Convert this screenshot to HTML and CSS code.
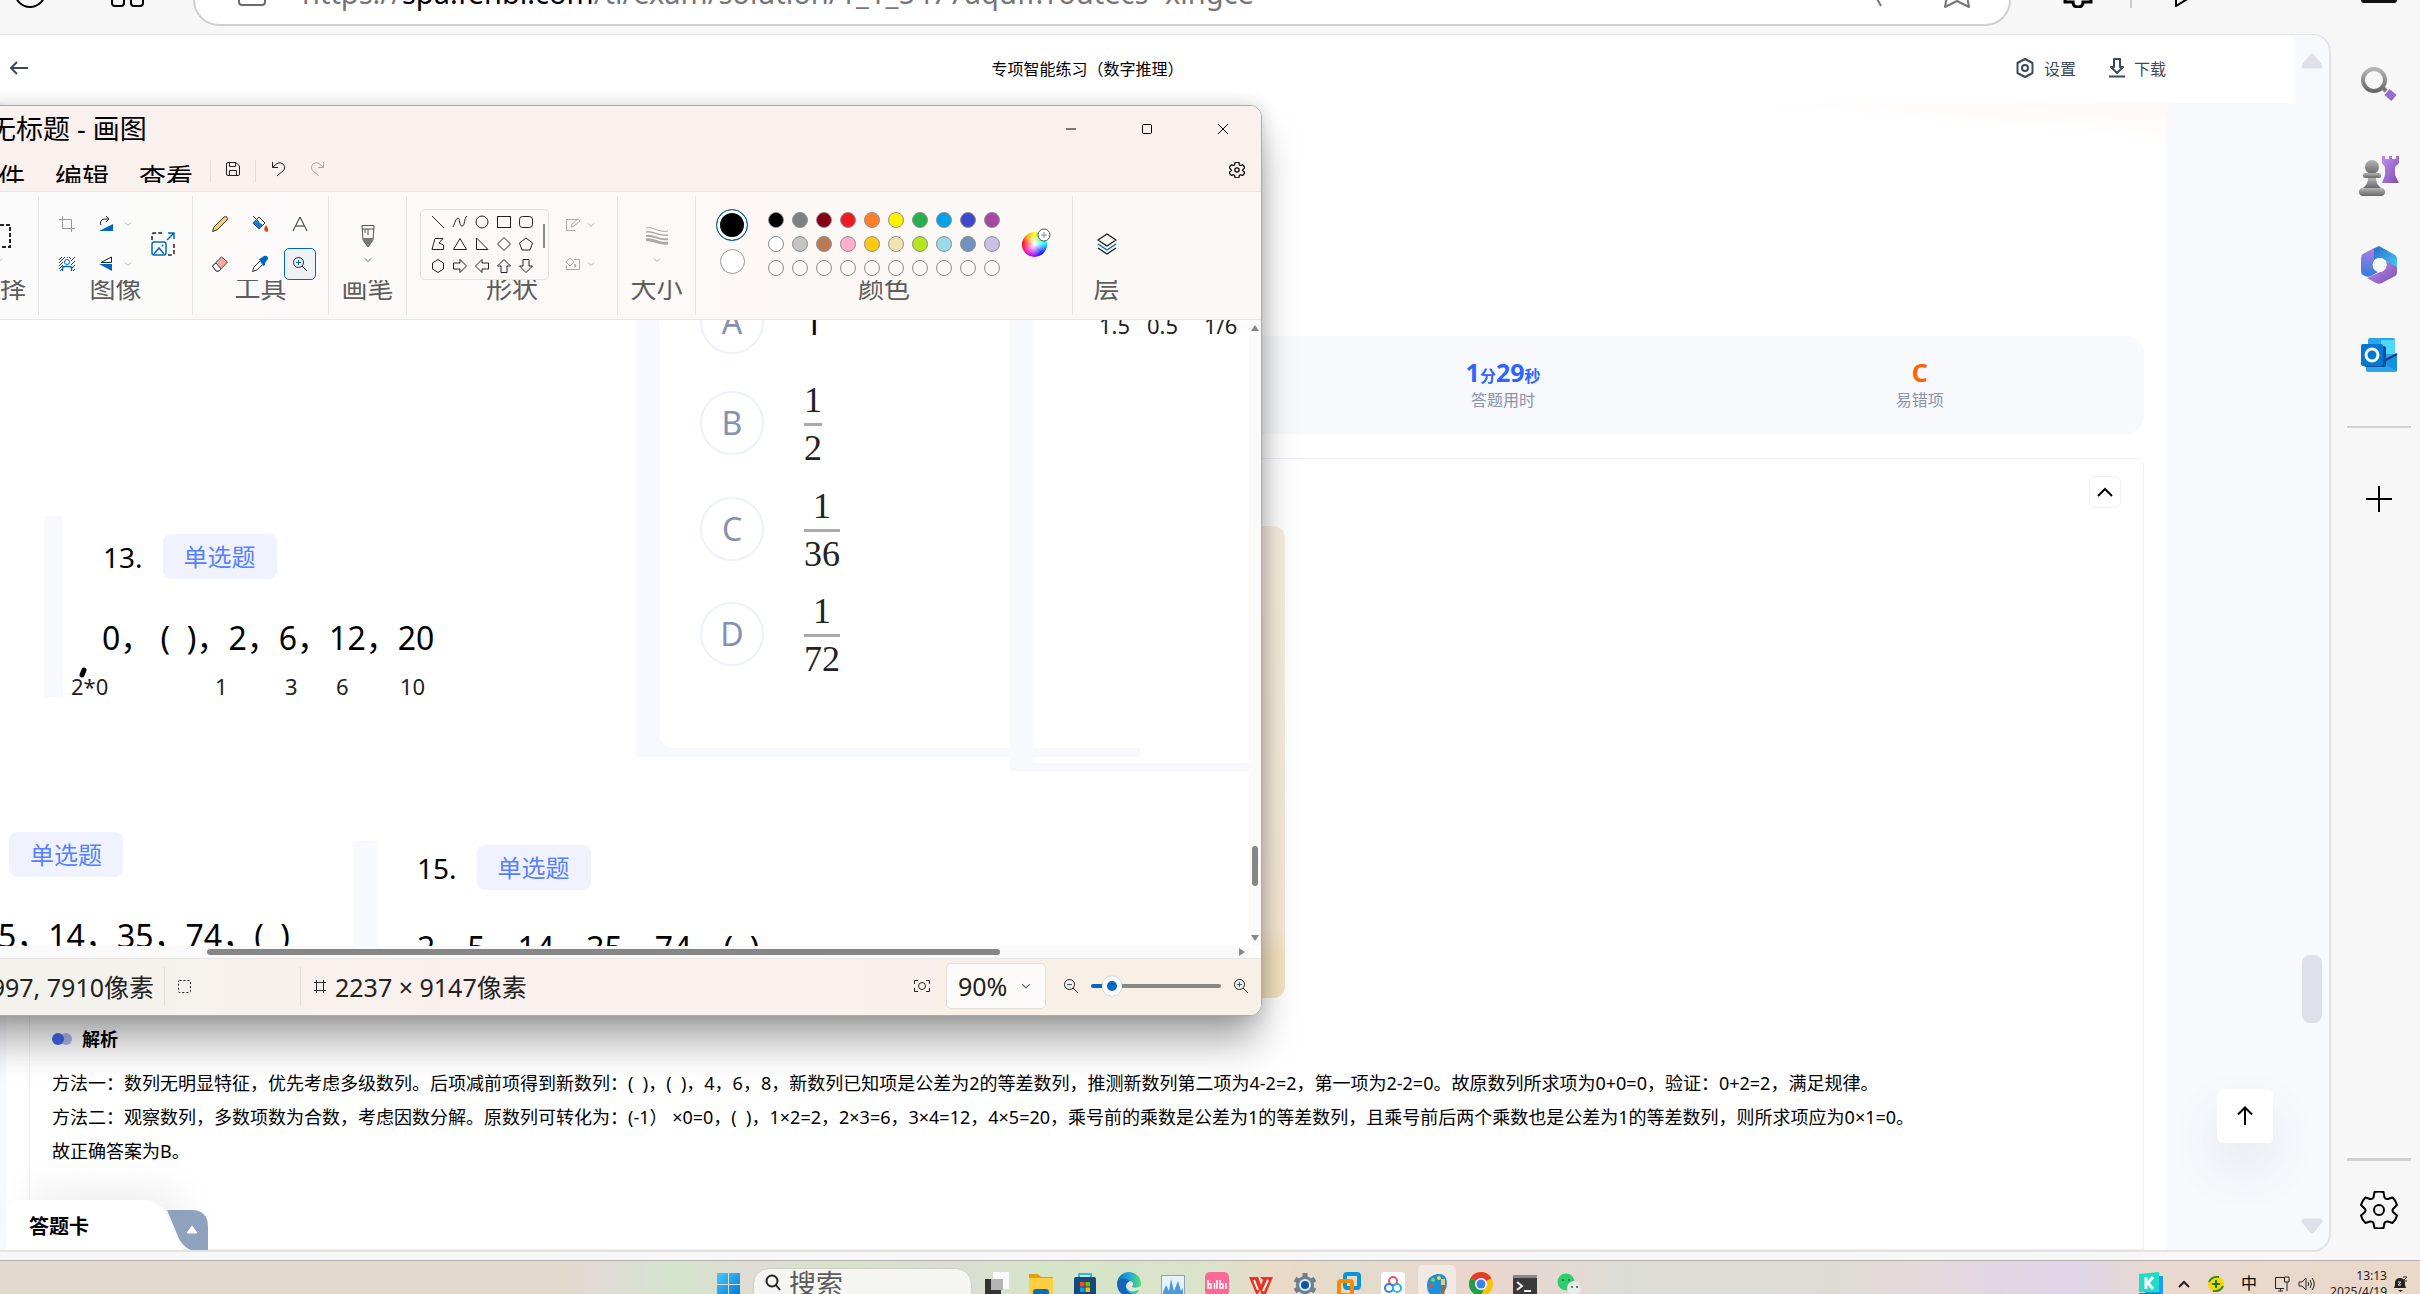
FILE: index.html
```html
<!DOCTYPE html>
<html lang="zh-CN">
<head>
<meta charset="utf-8">
<title>专项智能练习（数字推理）</title>
<link rel="stylesheet" href="styles.css">
</head>
<body>
<svg class="defs" aria-hidden="true">
  <defs>
    <linearGradient id="gPurple" x1="0" y1="0" x2="1" y2="1"><stop offset="0" stop-color="#c58cf0"/><stop offset="1" stop-color="#7652ae"/></linearGradient>
    <linearGradient id="gGrey" x1="0" y1="0" x2="0" y2="1"><stop offset="0" stop-color="#b5b5b5"/><stop offset="1" stop-color="#686868"/></linearGradient>
    <linearGradient id="gBlue" x1="0" y1="0" x2="1" y2="1"><stop offset="0" stop-color="#48c7fa"/><stop offset="1" stop-color="#0078d4"/></linearGradient>
    <linearGradient id="gEdge" x1="0" y1="0" x2="1" y2="0"><stop offset="0" stop-color="#0d6fc8"/><stop offset=".5" stop-color="#22a7d8"/><stop offset="1" stop-color="#5bdc72"/></linearGradient>
    <linearGradient id="gLoopA" x1="0" y1="0" x2="0" y2="1"><stop offset="0" stop-color="#b07be0"/><stop offset="1" stop-color="#2f7fe0"/></linearGradient>
    <linearGradient id="gLoopB" x1="0" y1="0" x2="1" y2="1"><stop offset="0" stop-color="#2a68c8"/><stop offset="1" stop-color="#45d0f5"/></linearGradient>
    <symbol id="chev" viewBox="0 0 8 8"><path d="M1 2.5 4 5.5 7 2.5" fill="none" stroke="currentColor"/></symbol>
    <symbol id="gear" viewBox="0 0 38 38"><path d="M14.500 1 Q19 0 23.500 1 L24.500 6.500 Q25.500 8.500 28 8 L32.500 6.500 Q36 9.500 37 14 L33 18 Q32 19.500 33 21 L37 24.500 Q36 29 32.500 32 L28 30.500 Q25.500 30 24.500 32 L23.500 37 Q19 38 14.500 37 L13.500 32 Q12.500 30 10 30.500 L5.500 32 Q2 29 1 24.500 L5 21 Q6 19.500 5 18 L1 14 Q2 9.500 5.500 6.500 L10 8 Q12.500 8.500 13.500 6.500 Z" fill="none" stroke="currentColor" stroke-linejoin="round"/><circle cx="19" cy="19" r="5" fill="none" stroke="currentColor"/></symbol>
  </defs>
</svg>

<div class="browser">
  <header class="toolbar">
    <button class="tb-btn refresh" aria-label="刷新"><svg width="34" height="9" viewBox="0 0 34 9"><circle cx="17" cy="-8" r="15" fill="none" stroke="#000" stroke-width="2"/></svg></button>
    <button class="tb-btn apps" aria-label="应用"><svg width="36" height="8" viewBox="0 0 36 8"><path d="M2 0V3Q2 6 5 6H11Q14 6 14 3V0M21 0V3Q21 6 24 6H30Q33 6 33 3V0" fill="none" stroke="#000" stroke-width="2"/></svg></button>
    <div class="address">
      <svg class="lock" width="28" height="7" viewBox="0 0 28 7"><path d="M1 0V2Q1 5 4 5H24Q27 5 27 2V0" fill="none" stroke="#6b6b6b" stroke-width="2"/></svg>
      <a class="url" href="#">https://<b>spa.fenbi.com</b>/ti/exam/solution/1_1_5477aqufi?routecs=xingce</a>
      <svg class="read" width="12" height="7" viewBox="0 0 12 7"><path d="M5 -3 10 6" stroke="#767676" stroke-width="2"/></svg>
      <svg class="star" width="28" height="8" viewBox="0 0 28 8"><path d="M4 -4 2 7 14 1 26 7 24 -4" fill="none" stroke="#767676" stroke-width="2" stroke-linejoin="round"/></svg>
    </div>
    <svg class="puzzle" width="30" height="8" viewBox="0 0 30 8"><path d="M2 -3V2H10Q10 7 15 7T20 2H28V-3" fill="none" stroke="#000" stroke-width="3"/></svg>
    <span class="tb-sep"></span>
    <svg class="play" width="20" height="7" viewBox="0 0 20 7"><path d="M3 -5V6L16 -2" fill="none" stroke="#000" stroke-width="2"/></svg>
    <span class="tb-batt"></span>
  </header>

  <div class="work">
    <main class="frame">
      <header class="page-head">
        <a class="back" href="#" aria-label="返回"><svg width="20" height="14" viewBox="0 0 20 14"><path d="M19 7H2M8 1 2 7 8 13" fill="none" stroke="#3c4a5c" stroke-width="2"/></svg></a>
        <h1>专项智能练习（数字推理）</h1>
        <nav class="head-actions">
          <button><svg width="20" height="22" viewBox="0 0 20 22"><path d="M10 2 17.500 6V16L10 20 2.500 16V6Z" fill="none" stroke="#3c4a5c" stroke-width="2" stroke-linejoin="round"/><circle cx="10" cy="11" r="3" fill="none" stroke="#3c4a5c" stroke-width="2"/></svg>设置</button>
          <button><svg width="16" height="20" viewBox="0 0 16 20"><path d="M5 1H11V9H14L8 15 2 9H5Z" fill="none" stroke="#3c4a5c" stroke-width="2" stroke-linejoin="round"/><path d="M0 18.500H16" stroke="#3c4a5c" stroke-width="2"/></svg>下载</button>
        </nav>
      </header>
      <section class="sheet">
        <div class="stats">
          <div class="stat time"><strong>1<small>分</small>29<small>秒</small></strong><span>答题用时</span></div>
          <div class="stat wrong"><strong>C</strong><span>易错项</span></div>
        </div>
        <article class="card">
          <button class="fold" aria-label="收起"><svg width="18" height="12" viewBox="0 0 18 12"><path d="M2 10 9 3 16 10" fill="none" stroke="#000" stroke-width="2"/></svg></button>
          <div class="media"></div>
          <h2><svg width="20" height="12" viewBox="0 0 20 12"><circle cx="14" cy="6" r="6" fill="#a9b8ea"/><circle cx="6" cy="6" r="6" fill="#4068e8"/></svg>解析</h2>
          <p>方法一：数列无明显特征，优先考虑多级数列。后项减前项得到新数列：(&nbsp;&nbsp;)，(&nbsp;&nbsp;)，4，6，8，新数列已知项是公差为2的等差数列，推测新数列第二项为4-2=2，第一项为2-2=0。故原数列所求项为0+0=0，验证：0+2=2，满足规律。</p>
          <p>方法二：观察数列，多数项数为合数，考虑因数分解。原数列可转化为：(-1） ×0=0，(&nbsp;&nbsp;)，1×2=2，2×3=6，3×4=12，4×5=20，乘号前的乘数是公差为1的等差数列，且乘号前后两个乘数也是公差为1的等差数列，则所求项应为0×1=0。</p>
          <p>故正确答案为B。</p>
        </article>
      </section>
      <div class="lane">
        <svg width="22" height="16" viewBox="0 0 22 16"><path d="M3 13 11 3 19 13Z" fill="#dfe0ea" stroke="#dfe0ea" stroke-width="5" stroke-linejoin="round"/></svg>
        <span class="lane-thumb"></span>
        <svg width="22" height="16" viewBox="0 0 22 16"><path d="M3 3 11 13 19 3Z" fill="#dfe0ea" stroke="#dfe0ea" stroke-width="5" stroke-linejoin="round"/></svg>
      </div>
      <button class="to-top" aria-label="回到顶部"><svg width="16" height="20" viewBox="0 0 16 20"><path d="M8 19V2M1 8.500 8 1.500 15 8.500" fill="none" stroke="#000" stroke-width="2"/></svg></button>
      <div class="answer-tab">
        <button class="answer">答题卡</button>
        <svg class="answer-side" width="42" height="40" viewBox="0 0 42 40"><path d="M0 0H24Q41 0 41 17V40H24Q14 36 10 24Z" fill="#8fa2bd"/><path d="M25 16 30 23H20Z" fill="#fff" stroke="#fff" stroke-width="1" stroke-linejoin="round"/></svg>
      </div>
    </main>

    <aside class="side">
      <button aria-label="搜索"><svg width="38" height="38" viewBox="0 0 38 38"><circle cx="14" cy="14" r="11" fill="none" stroke="url(#gGrey)" stroke-width="4"/><path d="M22 21 26 25" stroke="#777" stroke-width="4"/><path d="M27 26 34 32" stroke="#9a6cd0" stroke-width="8"/></svg></button>
      <button aria-label="游戏"><svg width="42" height="42" viewBox="0 0 42 42"><g fill="url(#gGrey)"><circle cx="14" cy="12" r="7"/><rect x="5" y="18" width="18" height="5" rx="2"/><path d="M10 23H18Q18 29 23 33H5Q10 29 10 23Z"/><rect x="1" y="33" width="26" height="8" rx="4"/></g><path d="M24 1H27V4H31V1H34V4H38V1H41V8L37 12V20L41 28H24L27 20V12L24 8Z" fill="url(#gPurple)"/></svg></button>
      <button aria-label="Microsoft 365"><svg width="38" height="40" viewBox="0 0 38 40"><path d="M13 4 19 1 35 10Q37 11 37 14V24L25 15A8 8 0 0 0 13 17Z" fill="url(#gLoopB)"/><path d="M37 22V27Q37 30 35 31L22 38Q19 39.500 16 38L7 33 20 27A8 8 0 0 0 26 16Z" fill="url(#gPurple)"/><path d="M14 3V16A8 8 0 0 0 18 27L11 31Q7 33 3 30 1 29 1 26V13Q1 10 3 9Z" fill="url(#gLoopA)"/><circle cx="19.500" cy="20" r="7" fill="#f7f7f7"/></svg></button>
      <button aria-label="Outlook"><svg width="38" height="36" viewBox="0 0 38 36"><rect x="8" y="1" width="27" height="20" rx="2" fill="#28a8ea"/><path d="M21 3H35V17H21Z" fill="#50d9ff"/><path d="M6 17H37V33Q37 35 35 35H8Q6 35 6 33Z" fill="#2aa5ea"/><path d="M37 17 22 26 37 34Z" fill="#1490df"/><path d="M22 25 37 17" stroke="#123b85" stroke-width="2"/><rect x="4" y="9" width="22" height="21" rx="2" fill="#0a4f8f"/><rect x="1" y="7" width="22" height="22" rx="2" fill="#0078d4"/><circle cx="12" cy="18" r="6" fill="none" stroke="#fff" stroke-width="3"/></svg></button>
      <hr>
      <button class="plus" aria-label="添加"><svg width="28" height="28" viewBox="0 0 28 28"><path d="M14 1V27M1 14H27" stroke="#000" stroke-width="2"/></svg></button>
      <hr class="low">
      <button aria-label="设置"><svg width="38" height="38" stroke-width="2"><use href="#gear"/></svg></button>
    </aside>
  </div>
</div>

<section class="paint" aria-label="画图">
  <div class="p-title">
    <span>无标题 - 画图</span>
    <div class="p-ctl">
      <button aria-label="最小化"><svg width="12" height="12"><path d="M1 6H11" stroke="#000"/></svg></button>
      <button aria-label="最大化"><svg width="12" height="12"><rect x="1.500" y="1.500" width="9" height="9" rx="1" fill="none" stroke="#000"/></svg></button>
      <button aria-label="关闭"><svg width="12" height="12"><path d="M1 1 11 11M11 1 1 11" stroke="#000"/></svg></button>
    </div>
  </div>
  <div class="p-menu">
    <button>文件</button><button>编辑</button><button>查看</button>
    <span class="m-ico"><svg width="16" height="16" viewBox="0 0 16 16" fill="none" stroke="#222"><path d="M1.500 3Q1.500 1.500 3 1.500H11L14.500 5V13Q14.500 14.500 13 14.500H3Q1.500 14.500 1.500 13ZM4.500 1.500V5.500H10.500V1.500M4.500 14.500V9.500H11.500V14.500"/></svg></span>
    <span class="m-ico undo"><svg width="16" height="16" viewBox="0 0 16 16" fill="none" stroke="#222"><path d="M1.500 1V6.500H7M2 6 6 2.500Q9 .5 12 3T13 9L6 15"/></svg><svg width="16" height="16" viewBox="0 0 16 16" fill="none" stroke="#aaa"><path d="M14.500 1V6.500H9M14 6 10 2.500Q7 .5 4 3T3 9L10 15"/></svg></span>
    <button class="p-gear" aria-label="设置"><svg width="16" height="16" stroke-width="3"><use href="#gear"/></svg></button>
  </div>

  <div class="ribbon">
    <div class="grp g-select"><div class="tools"><svg width="24" height="24" viewBox="0 0 24 24"><rect x="1" y="1" width="22" height="22" fill="none" stroke="#222" stroke-width="2" stroke-dasharray="4 2"/></svg><svg class="cv" width="8" height="8"><use href="#chev"/></svg></div><div class="lab">选择</div></div>

    <div class="grp g-image"><div class="tools">
      <svg width="16" height="16" viewBox="0 0 16 16" fill="none" stroke="#999"><path d="M3.500 0V12.500H16M0 3.500H12.500V16"/></svg>
      <svg width="16" height="16" viewBox="0 0 16 16"><path d="M15 8V15H1Z" fill="#0067c0"/><path d="M3 9A4 4 0 0 1 6 3H11M8 0 11 3 8 6" fill="none" stroke="#222"/></svg>
      <svg class="cv" width="8" height="8"><use href="#chev"/></svg>
      <svg class="big" width="24" height="24" viewBox="0 0 24 24" fill="none"><path d="M1 8V3Q1 1 3 1H12M23 12V21Q23 23 21 23H17" stroke="#222" stroke-dasharray="4 2" stroke-width="1.500"/><path d="M16 8 23 1M17 1H23V7" stroke="#0067c0" stroke-width="1.500"/><rect x="1" y="10" width="14" height="13" rx="2" stroke="#0067c0" stroke-width="1.500"/><path d="M3 22 8 16 13 22" stroke="#0067c0" stroke-width="1.500"/><circle cx="11.500" cy="13.500" r="1" fill="#0067c0"/></svg>
      <svg width="16" height="14" viewBox="0 0 16 14" fill="none"><path d="M0 3 3 0M0 6 6 0M0 9 4 5M0 12 4 8M10 0 12 2M12 4 16 0M12 8 16 4M12 12 16 8M1 14 3 12M14 14 16 12M8 1 9 0" stroke="#333"/><circle cx="8" cy="5" r="2.500" stroke="#0067c0"/><path d="M3.500 14V11Q3.500 9.500 5 9.500H11Q12.500 9.500 12.500 11V14" stroke="#0067c0" stroke-width="1.500"/></svg>
      <svg width="16" height="16" viewBox="0 0 16 16"><path d="M14 8V15L1 8Z" fill="#0067c0"/><path d="M13.500 1V6.500H3Z" fill="none" stroke="#222"/></svg>
      <svg class="cv" width="8" height="8"><use href="#chev"/></svg>
    </div><div class="lab">图像</div></div>

    <div class="grp g-tools"><div class="tools">
      <button aria-label="铅笔"><svg width="18" height="18" viewBox="0 0 18 18"><path d="M1.500 16.500 3 12 13 2Q14.500 .8 16 2.200T16 5L6 15Z" fill="#f5cf6b" stroke="#333"/></svg></button>
      <button aria-label="填充"><svg width="18" height="18" viewBox="0 0 18 18"><path d="M2 8 8 2 14 8 8 14Z" fill="#fff" stroke="#333"/><path d="M2 8 5 5 12 10 8 14Z" fill="#2277cc"/><path d="M2 1 8 7" stroke="#333"/><path d="M15 10Q18 14 17 16T14 16 15 10Z" fill="#d8481c"/></svg></button>
      <button aria-label="文本"><svg width="16" height="16" viewBox="0 0 16 16"><path d="M1 15 8 1 15 15M4 10H12" fill="none" stroke="#222"/></svg></button>
      <button aria-label="橡皮擦"><svg width="18" height="18" viewBox="0 0 18 18"><path d="M1.500 11 10.500 2 16.500 7 8 16H5Z" fill="#f6a9a9" stroke="#444"/><path d="M1.500 11 5 16H8L10 14 5 8Z" fill="#fff" stroke="#444"/></svg></button>
      <button aria-label="取色器"><svg width="18" height="18" viewBox="0 0 18 18"><path d="M10 5 3 12 1.500 16.500 6 15 13 8" fill="#fff" stroke="#333"/><path d="M8 4 10 3 13 1Q17 0 17 4L14 8 14 10 12 11Z" fill="#0067c0"/></svg></button>
      <button class="on" aria-label="放大镜"><svg width="16" height="16" viewBox="0 0 16 16" fill="none"><circle cx="6.500" cy="6.500" r="5" stroke="#222"/><path d="M10 10 15 15" stroke="#222"/><path d="M4 6.500H9M6.500 4V9" stroke="#0067c0"/></svg></button>
    </div><div class="lab">工具</div></div>

    <div class="grp g-one"><div class="tools"><svg width="16" height="24" viewBox="0 0 16 24"><path d="M2 1.500H14L13 16 8 23 3 16Z" fill="none" stroke="#555"/><path d="M3 14H13L12 18 8 23 4 18Z" fill="#777"/><path d="M2 5H14M5 5V9M8 5V11" stroke="#555"/></svg><svg class="cv dark" width="8" height="8"><use href="#chev"/></svg></div><div class="lab">画笔</div></div>

    <div class="grp g-shape"><div class="tools">
      <div class="shapes">
        <svg viewBox="0 0 16 16"><path d="M2 2 14 14"/></svg>
        <svg viewBox="0 0 16 16"><path d="M1 13C3 9 4 4 6 4S7 12 10 12 12 4 15 2"/></svg>
        <svg viewBox="0 0 16 16"><circle cx="8" cy="8" r="6"/></svg>
        <svg viewBox="0 0 16 16"><rect x="1.500" y="2.500" width="13" height="11"/></svg>
        <svg viewBox="0 0 16 16"><rect x="1.500" y="2.500" width="13" height="11" rx="3"/></svg>
        <svg viewBox="0 0 16 16"><path d="M5 2.500H13L9 7 13.500 9V13.500H2Z"/></svg>
        <svg viewBox="0 0 16 16"><path d="M8 2.500 14.500 13.500H1.500Z"/></svg>
        <svg viewBox="0 0 16 16"><path d="M2.500 2V13.500H14Z"/></svg>
        <svg viewBox="0 0 16 16"><path d="M8 1.500 14.500 8 8 14.500 1.500 8Z"/></svg>
        <svg viewBox="0 0 16 16"><path d="M8 2 14.500 7 12 14H4L1.500 7Z"/></svg>
        <svg viewBox="0 0 16 16"><path d="M8 1.500 13.500 5V11L8 14.500 2.500 11V5Z"/></svg>
        <svg viewBox="0 0 16 16"><path d="M1.500 5H8V1.500L14.500 8 8 14.500V11H1.500Z"/></svg>
        <svg viewBox="0 0 16 16"><path d="M14.500 5H8V1.500L1.500 8 8 14.500V11H14.500Z"/></svg>
        <svg viewBox="0 0 16 16"><path d="M5 14.500V8H1.500L8 1.500 14.500 8H11V14.500Z"/></svg>
        <svg viewBox="0 0 16 16"><path d="M5 1.500V8H1.500L8 14.500 14.500 8H11V1.500Z"/></svg>
        <span class="sh-bar"></span>
      </div>
      <div class="sh-opt">
        <svg width="16" height="14" viewBox="0 0 16 14" fill="none" stroke="#aaa"><path d="M12 1.500H1.500V12.500H10M6 9 7 6 13 1 15 3 9 8Z"/></svg><svg class="cv" width="8" height="8"><use href="#chev"/></svg>
        <svg width="16" height="14" viewBox="0 0 16 14" fill="none" stroke="#aaa"><path d="M9 2.500H14.500V12.500H1.500V8M1 5 5 1 9 5 5 9ZM10 7Q12 10 10 10T10 7"/></svg><svg class="cv" width="8" height="8"><use href="#chev"/></svg>
      </div>
    </div><div class="lab">形状</div></div>

    <div class="grp g-one"><div class="tools"><svg width="24" height="24" viewBox="0 0 24 24" fill="none" stroke="#aaa"><path d="M1 4C8 2 14 9 23 7"/><path d="M1 8C8 6 14 13 23 11" stroke-width="1.500"/><path d="M1 12C8 10 14 17 23 15" stroke-width="2"/><path d="M1 16C8 14 14 21 23 19" stroke-width="3"/></svg><svg class="cv" width="8" height="8"><use href="#chev"/></svg></div><div class="lab">大小</div></div>

    <div class="grp g-color"><div class="tools">
      <div class="active"><button class="c1" aria-label="颜色 1"></button><button class="c2" aria-label="颜色 2"></button></div>
      <div class="pal">
        <i class="k0"></i><i class="k1"></i><i class="k2"></i><i class="k3"></i><i class="k4"></i><i class="k5"></i><i class="k6"></i><i class="k7"></i><i class="k8"></i><i class="k9"></i>
        <i class="w0"></i><i class="w1"></i><i class="w2"></i><i class="w3"></i><i class="w4"></i><i class="w5"></i><i class="w6"></i><i class="w7"></i><i class="w8"></i><i class="w9"></i>
        <i></i><i></i><i></i><i></i><i></i><i></i><i></i><i></i><i></i><i></i>
      </div>
      <button class="wheel" aria-label="编辑颜色"><svg width="14" height="14" viewBox="0 0 14 14"><circle cx="7" cy="7" r="6" fill="#fff" stroke="#555"/><path d="M7 4V10M4 7H10" stroke="#888"/></svg></button>
    </div><div class="lab">颜色</div></div>

    <div class="grp g-layer"><div class="tools"><svg width="22" height="22" viewBox="0 0 22 22" fill="none" stroke="#222" stroke-width="1.500" stroke-linejoin="round"><path d="M11 1 20 7 11 13 2 7Z"/><path d="M2 11 11 17 20 11" stroke="#0067c0"/><path d="M2 15 11 21 20 15"/></svg></div><div class="lab">层</div></div>
  </div>

  <div class="view">
    <div class="canvas"><div class="art">
      <div class="pane pane1"></div><div class="pane-tail"></div>
      <div class="pane pane2"></div>
      <div class="opt oa"><b>A</b><span>1</span></div>
      <div class="opt ob"><b>B</b><span class="fr"><u>1</u><u>2</u></span></div>
      <div class="opt oc"><b>C</b><span class="fr"><u>1</u><u>36</u></span></div>
      <div class="opt od"><b>D</b><span class="fr"><u>1</u><u>72</u></span></div>
      <span class="note n1">1.5</span><span class="note n2">0.5</span><span class="note n3">1/6</span>

      <div class="strip s13"></div>
      <div class="q q13"><span>13.</span><em>单选题</em></div>
      <div class="seq e13">0，&nbsp;(&nbsp;&nbsp;)，2，6，12，20</div>
      <span class="note m1">2*0</span><span class="note m2">1</span><span class="note m3">3</span><span class="note m4">6</span><span class="note m5">10</span>
      <svg class="ink" width="8" height="12" viewBox="0 0 8 12"><path d="M5 3 3 8" stroke="#000" stroke-width="5" stroke-linecap="round"/></svg>

      <div class="q q14"><em>单选题</em></div>
      <div class="seq e14">5，14，35，74，(&nbsp;&nbsp;)</div>
      <div class="strip s15"></div>
      <div class="q q15"><span>15.</span><em>单选题</em></div>
      <div class="seq e15">2，5，14，35，74，(&nbsp;&nbsp;)</div>
    </div></div>
    <div class="vbar"><svg width="8" height="8"><path d="M0 7 4 1 8 7Z" fill="#868686"/></svg><span></span><svg width="8" height="8"><path d="M0 1 4 7 8 1Z" fill="#868686"/></svg></div>
    <div class="hbar"><span></span><svg width="8" height="8"><path d="M1 0 7 4 1 8Z" fill="#868686"/></svg></div>
  </div>

  <div class="status">
    <span class="st pos">997, 7910像素</span>
    <span class="st sel"><svg width="13" height="13" viewBox="0 0 13 13"><rect x=".5" y=".5" width="12" height="12" rx="1" fill="none" stroke="#222" stroke-dasharray="2 2"/></svg></span>
    <span class="st dim"><svg width="12" height="13" viewBox="0 0 12 13"><path d="M2.500 0V13M9.500 0V13M0 2.500H12M0 10.500H12" stroke="#222"/></svg>2237 × 9147像素</span>
    <svg class="fit" width="16" height="12" viewBox="0 0 16 12" fill="none" stroke="#222"><path d="M4 .5H.5V4M12 .5H15.500V4M4 11.500H.5V8M12 11.500H15.500V8"/><circle cx="8" cy="6" r="3.500"/></svg>
    <label class="zoom"><select aria-label="缩放"><option>90%</option></select><svg class="cv dark" width="10" height="10"><use href="#chev"/></svg></label>
    <svg width="16" height="16" viewBox="0 0 16 16" fill="none"><circle cx="6.500" cy="6.500" r="5" stroke="#222"/><path d="M10 10 15 15" stroke="#222"/><path d="M4 6.500H9" stroke="#0067c0"/></svg>
    <input class="range" type="range" min="0" max="100" value="10" aria-label="缩放比例">
    <svg width="16" height="16" viewBox="0 0 16 16" fill="none"><circle cx="6.500" cy="6.500" r="5" stroke="#222"/><path d="M10 10 15 15" stroke="#222"/><path d="M4 6.500H9M6.500 4V9" stroke="#0067c0"/></svg>
  </div>
</section>

<footer class="taskbar">
  <div class="apps-row">
    <button class="start" aria-label="开始"><svg width="24" height="24"><path d="M0 0H11V11H0ZM12 0H23V11H12ZM0 12H11V23H0ZM12 12H23V23H12Z" fill="url(#gBlue)"/></svg></button>
    <label class="search"><svg width="16" height="18" viewBox="0 0 16 18"><circle cx="7" cy="7" r="5.500" fill="none" stroke="#222" stroke-width="2"/><path d="M11 11 15 16" stroke="#222" stroke-width="2"/></svg><input type="text" placeholder="搜索" aria-label="搜索"></label>
    <button aria-label="任务视图"><svg width="24" height="24"><rect x="8" width="16" height="17" fill="#fafafa"/><rect y="7" width="16" height="17" fill="#333"/><rect x="6" y="7" width="12" height="11" fill="#b4b4b4"/></svg></button>
    <button aria-label="文件资源管理器"><svg width="24" height="24"><path d="M0 2H9L12 5H24V24H0Z" fill="#e0a106"/><path d="M0 6H24V24H0Z" fill="#ffcf3f"/><path d="M4 24V20Q4 17 7 17H17Q20 17 20 20V24Z" fill="#0f6cbd"/></svg></button>
    <button aria-label="应用商店"><svg width="24" height="24"><path d="M6 6V2H18V6" fill="none" stroke="#35b8ea" stroke-width="2"/><rect x="1" y="5" width="22" height="19" rx="2" fill="#174a7c"/><path d="M7 10H11.500V14.500H7Z" fill="#f25022"/><path d="M12.500 10H17V14.500H12.500Z" fill="#7fba00"/><path d="M7 15.500H11.500V20H7Z" fill="#00a4ef"/><path d="M12.500 15.500H17V20H12.500Z" fill="#ffb900"/></svg></button>
    <button aria-label="Edge"><svg width="24" height="24"><circle cx="12" cy="12" r="12" fill="url(#gEdge)"/><path d="M22 18Q12 22 9 15 9 10 13 9 18 10 15 15 19 17 24 14V18Z" fill="#e3e6d6"/><path d="M1 9Q6 4 13 9 8 11 9 16T17 23Q4 26 1 16Z" fill="#1267b8"/></svg></button>
    <button aria-label="性能监视器"><svg width="24" height="24"><rect x=".5" y="3.500" width="23" height="20" fill="#e6f2fa" stroke="#8ba0b0"/><path d="M2 20 5 13 8 19 10 7 13 19 17 9 20 19 22 16V22H2Z" fill="#4c9ad8"/></svg></button>
    <button aria-label="哔哩哔哩"><svg width="24" height="24"><rect width="24" height="24" rx="5" fill="#fb6a97"/><path d="M3 8V16H6V12H3M9.500 11V17M12 8V17M15 8V16H18V12H15M21 11V17" fill="none" stroke="#fff" stroke-width="1.500"/></svg></button>
    <button aria-label="WPS"><svg width="24" height="24"><path d="M0 5H9L12 13 14 8 11 5H24L16 24H13L11 18 8 24Z" fill="#e93423"/><path d="M5 8 9 18M14 19 19 8" stroke="#fff" stroke-width="2"/></svg></button>
    <button aria-label="设置"><svg width="24" height="24"><circle cx="12" cy="13" r="9" fill="#6e7f8e"/><path d="M12 1V25M2 7 22 19M22 7 2 19" stroke="#6e7f8e" stroke-width="5"/><circle cx="12" cy="13" r="6" fill="#dfe9f2"/><circle cx="12" cy="13" r="4" fill="#0d57a8"/></svg></button>
    <button aria-label="虚拟机"><svg width="24" height="24"><rect x="8" y="2" width="14" height="14" rx="2" fill="none" stroke="#0a95d8" stroke-width="4"/><rect x="2" y="9" width="13" height="14" rx="2" fill="none" stroke="#f58a07" stroke-width="4"/></svg></button>
    <button aria-label="网盘"><svg width="24" height="24"><rect width="24" height="24" rx="4" fill="#fff"/><circle cx="12" cy="9" r="4" fill="none" stroke="#e8506a" stroke-width="2"/><circle cx="8" cy="16" r="4" fill="none" stroke="#2a7fe8" stroke-width="2"/><circle cx="16" cy="16" r="4" fill="none" stroke="#28b3e8" stroke-width="2"/></svg></button>
    <button class="cur" aria-label="画图"><svg width="24" height="24"><path d="M12 2Q22 1 22 11T12 23Q2 25 2 13 2 4 12 2Z" fill="#1d90d8"/><circle cx="8" cy="8" r="2" fill="#7fd54f"/><circle cx="14" cy="6" r="2" fill="#ffd23b"/><circle cx="6" cy="14" r="2" fill="#e8503a"/><path d="M18 9V24" stroke="#a3662e" stroke-width="3"/><path d="M18 7V13" stroke="#f4c37a" stroke-width="4"/></svg></button>
    <button aria-label="Chrome"><svg width="24" height="24"><circle cx="12" cy="12" r="12" fill="#f9c20b"/><path d="M12 12 1.600 6A12 12 0 0 1 22.400 6Z" fill="#e33b2e"/><path d="M12 12 1.600 6A12 12 0 0 0 12 24L15 16Z" fill="#229c4d"/><circle cx="12" cy="12" r="6" fill="#fff"/><circle cx="12" cy="12" r="4.500" fill="#3b82f0"/></svg></button>
    <button aria-label="终端"><svg width="24" height="24"><rect y="3" width="24" height="21" rx="2" fill="#3a3a3a"/><rect y="3" width="24" height="3" fill="#888"/><path d="M4 10 9 14 4 18M11 19H18" fill="none" stroke="#eee" stroke-width="2"/></svg></button>
    <button aria-label="微信"><svg width="24" height="24"><circle cx="9" cy="10" r="8.500" fill="#2ccf6c"/><circle cx="17" cy="16" r="7" fill="#e9ecea"/><g fill="#1a6b3a"><circle cx="6" cy="8" r="1"/><circle cx="12" cy="8" r="1"/><circle cx="15" cy="15" r="1"/><circle cx="20" cy="15" r="1"/></g></svg></button>
  </div>
  <div class="tray">
    <svg width="24" height="24"><rect x="6" y="4" width="18" height="20" fill="#1d9ff0"/><path d="M0 2 20 0V20H0Z" fill="#1fdcc8"/><path d="M7 5V17M14 5 9 11 14 17" fill="none" stroke="#fff" stroke-width="3"/><path d="M0 21H22V24H0Z" fill="#1678f0"/></svg>
    <svg width="12" height="8"><path d="M1 7 6 2 11 7" fill="none" stroke="#222" stroke-width="2"/></svg>
    <svg width="16" height="16"><circle cx="8" cy="8" r="8" fill="#f7d708"/><path d="M1 6Q4 0 11 1M15 10Q12 16 5 15" fill="none" stroke="#2a8a2a" stroke-width="2"/><path d="M8 4V12M4 8H12" stroke="#157a1c" stroke-width="2"/></svg>
    <span class="ime">中</span>
    <svg width="16" height="16"><path d="M10 1.500H1.500V12.500H10M4 15H9M6.500 12V15M10.500 1H15V6H10.500ZM13 6V15" fill="none" stroke="#222"/></svg>
    <svg width="18" height="16"><path d="M1 6H4L8 2V14L4 10H1ZM10 6Q11.500 8 10 10M12 4Q15 8 12 12M14 2Q18.500 8 14 14" fill="none" stroke="#222"/></svg>
    <time>13:13<br>2025/4/19</time>
    <svg width="14" height="16"><path d="M0 12H12L11 9V6Q10 2 6 2T1 6V9ZM4 14H9L6.500 16Z" fill="#222"/><path d="M4 6H7L4 9H7" fill="none" stroke="#eee"/><path d="M9 1H13L9 5H13" fill="none" stroke="#222"/></svg>
  </div>
</footer>
</body>
</html>
```
FILE: styles.css
```css
* { box-sizing: border-box; }
html, body { height: 100%; }
body {
  margin: 0;
  display: flex;
  flex-direction: column;
  overflow: hidden;
  position: relative;
  background: #f7f7f7;
  color: #000;
  font-family: "Noto Sans", "Noto Sans CJK SC", sans-serif;
}
button, input, select { font: inherit; color: inherit; border: 0; background: none; padding: 0; margin: 0; }
svg { display: block; flex: none; }
.defs { position: absolute; width: 0; height: 0; }
h1, h2, p { margin: 0; font-weight: 400; }

/* Browser chrome */
.browser { flex: 1; min-height: 0; display: flex; flex-direction: column; padding-bottom: 8px; }
.toolbar { height: 34px; flex: none; display: flex; align-items: flex-start; overflow: hidden; }
.refresh { margin-left: 13px; }
.apps { margin-left: 63px; }
.address {
  flex: 1;
  height: 26px;
  margin-left: 47px;
  padding: 0 38px 0 43px;
  display: flex;
  align-items: flex-start;
  overflow: hidden;
  background: #fff;
  border: 2px solid #d0d0d0;
  border-top: 0;
  border-radius: 0 0 28px 28px;
}
.url {
  align-self: flex-end;
  margin: 0 auto 11px 36px;
  font-size: 29px;
  line-height: 40px;
  color: #767676;
  text-decoration: none;
  white-space: nowrap;
}
.url b { font-weight: 400; color: #000; }
.star { margin-left: 60px; }
.puzzle { margin-left: 52px; }
.tb-sep { width: 2px; height: 8px; margin-left: 37px; background: #ccc; }
.play { margin-left: 41px; }
.tb-batt { width: 36px; height: 3px; margin: 0 23px 0 168px; background: #111; border-radius: 0 0 3px 3px; }

.work { flex: 1; min-height: 0; display: grid; grid-template-columns: 1fr 89px; }
.frame {
  position: relative;
  min-width: 0;
  display: grid;
  grid-template: 68px 1fr / 1fr 34px;
  overflow: hidden;
  background: #f8f9fd;
  border: 1px solid #e3e3e3;
  border-width: 1px 2px 2px 0;
  border-radius: 0 18px 18px 0;
}
.page-head {
  display: grid;
  grid-template-columns: 1fr auto 1fr;
  align-items: center;
  padding: 0 129px 2px 9px;
  background: #fff;
}
.page-head h1 { font-size: 16px; }
.back { justify-self: start; }
.head-actions { display: flex; justify-content: flex-end; gap: 33px; color: #3c4a5c; }
.head-actions button { display: flex; align-items: center; gap: 9px; font-size: 16px; }
.sheet {
  grid-row: 2;
  margin: 0 128px 0 6px;
  padding: 233px 23px 0;
  display: flex;
  flex-direction: column;
  min-height: 0;
  background: linear-gradient(185deg, #fff8f5, #fff 3%) #fff;
}
.stats {
  flex: none;
  height: 98px;
  padding: 0 16px;
  display: grid;
  grid-template-columns: repeat(5, 1fr);
  background: #f7f9fd;
  border-radius: 18px;
}
.stat { display: flex; flex-direction: column; align-items: center; padding-top: 20px; }
.time { grid-column: 4; color: #2f64ff; }
.wrong { grid-column: 5; color: #ff6200; }
.stat strong { font-size: 25px; line-height: 32px; height: 32px; }
.stat small { font-size: 16px; }
.stat span { font-size: 16px; line-height: 24px; color: #8a93ab; }
.card {
  flex: 1;
  min-height: 0;
  margin-top: 24px;
  padding: 17px 22px 0 22px;
  border: 1px solid #eff1f9;
  border-radius: 8px 8px 0 0;
}
.fold { display: grid; place-items: center; width: 32px; height: 32px; margin-left: auto; border: 1px solid #eef0f8; border-radius: 6px; }
.media { height: 472px; max-width: 1233px; margin-top: 18px; border-radius: 12px; background: linear-gradient(#f8efe0, #f6ebd6 85%, #f6e4c2 91%); }
.card h2 { display: flex; align-items: center; gap: 10px; margin: 29px 0 15px; font-size: 18px; font-weight: 700; line-height: 24px; }
.card p { font-size: 18px; line-height: 34px; white-space: nowrap; }
.lane { grid-area: 1 / 2 / 3 / 3; display: flex; flex-direction: column; align-items: center; padding: 18px 0 16px; }
.lane-thumb { width: 20px; height: 68px; margin: auto 0 195px; border-radius: 8px; background: #dfe0ea; }
.to-top {
  position: absolute;
  right: 56px;
  bottom: 107px;
  width: 56px;
  height: 54px;
  display: grid;
  place-items: center;
  background: #fff;
  border-radius: 6px;
  box-shadow: 0 24px 48px rgba(80, 80, 130, .1);
}
.answer-tab { position: absolute; left: 8px; bottom: 0; display: flex; align-items: flex-end; }
.answer {
  position: relative;
  width: 154px;
  height: 50px;
  padding-left: 21px;
  text-align: left;
  font-size: 20px;
  font-weight: 700;
  background: #fff;
  border-radius: 10px 16px 0 0;
  box-shadow: 20px -10px 40px rgba(0, 0, 0, .07);
}
.answer::after { content: ""; position: absolute; right: -24px; bottom: 0; width: 30px; height: 44px; background: #fff; clip-path: polygon(0 0, 20% 0, 90% 100%, 0 100%); }
.answer-side { margin-left: 5px; position: relative; }

.side { display: flex; flex-direction: column; align-items: center; padding: 32px 0 23px 7px; }
.side button:nth-child(2) { margin-top: 51px; }
.side button:nth-child(3) { margin-top: 48px; }
.side button:nth-child(4) { margin-top: 52px; }
.side hr { width: 64px; height: 2px; margin: 53px 0 0; border: 0; background: #d0d0d0; }
.side .plus { margin-top: 57px; }
.side .low { height: 3px; margin: auto 0 30px; }

/* Paint window */
.paint {
  position: absolute;
  left: -40px;
  top: 105px;
  width: 1302px;
  height: 911px;
  display: flex;
  flex-direction: column;
  overflow: hidden;
  border: 1px solid #aaa;
  border-radius: 12px;
  background: #fff;
  box-shadow: 0 28px 40px -4px rgba(0, 0, 0, .36), 0 0 18px rgba(0, 0, 0, .16);
}
.p-title { height: 47px; flex: none; display: flex; justify-content: space-between; align-items: center; padding: 0 0 2px 28px; background: #faf0ee; font-size: 27px; line-height: 44px; }
.p-ctl { display: flex; }
.p-ctl button { width: 76px; height: 44px; display: grid; place-items: center; }
.p-menu { height: 39px; flex: none; padding: 7px 16px 0 10px; display: flex; align-items: flex-start; background: #faf0ee; border-bottom: 1px solid #ece5e3; }
.p-menu > button { height: 23px; margin-right: 30px; overflow: hidden; font-size: 27px; line-height: 36px; }
.m-ico { display: flex; align-items: center; gap: 22px; height: 22px; margin-left: -13px; padding: 0 14px 4px; border-left: 1px solid #e3dbd9; }
.undo { margin-left: 0; padding-left: 15px; }
.p-menu > .p-gear { margin: 2px 0 0 auto; height: 16px; }

.ribbon { height: 128px; flex: none; padding: 4px 0; display: grid; grid-template-columns: 78px 154px 136px 78px 211px 78px 377px 1fr; background: linear-gradient(90deg, #fafbfb, #fdf8f6 60%, #fbf8f6); border-bottom: 1px solid #e6e6e6; }
.grp { border-right: 1px solid #e8e6e5; display: flex; flex-direction: column; }
.g-layer { border: 0; width: 67px; }
.tools { height: 84px; flex: none; }
.lab { height: 35px; overflow: hidden; text-align: center; font-size: 26px; line-height: 16px; color: #5d5d5d; }
.cv { color: #b5b5b5; }
.cv.dark { color: #666; }
.g-select .tools { padding: 28px 0 0 26px; display: grid; justify-items: center; align-content: start; gap: 8px; width: 50px; }
.g-select .lab { text-align: right; padding-right: 12px; }
.g-image .tools { display: grid; grid-template: repeat(2, 40px) / 44px 34px 10px 60px; padding: 8px 0 0 6px; place-items: center; }
.g-image .big { grid-area: 1 / 4 / 3 / 5; }
.g-tools .tools { display: grid; grid-template: repeat(2, 40px) / repeat(3, 40px); padding: 8px 0 0 7px; place-items: center; }
.g-tools button { width: 32px; height: 32px; display: grid; place-items: center; border-radius: 5px; }
.g-tools .on { border: 1px solid #0067c0; background: #f0f1f2; }
.g-one .tools { display: grid; justify-items: center; align-content: start; gap: 8px; padding-top: 28px; }
.g-shape .tools { display: flex; padding: 13px 0 0 13px; }
.shapes { position: relative; width: 129px; height: 71px; display: grid; grid-template: repeat(3, 22px) / repeat(5, 22px); padding: 1px 0 0 6px; place-items: center; border: 1px solid #e4e2e1; border-radius: 5px; }
.shapes svg { width: 16px; height: 16px; fill: none; stroke: #222; }
.sh-bar { position: absolute; right: 3px; top: 14px; width: 2px; height: 24px; background: #8a8a8a; }
.sh-opt { display: grid; grid-template: repeat(2, 39px) / 20px 14px; place-items: center end; margin: -4px 0 0 12px; }
.g-color .tools { display: flex; padding-left: 20px; }
.active { width: 32px; display: grid; justify-items: center; align-content: start; gap: 8px; padding-top: 13px; }
.c1 { width: 32px; height: 32px; border-radius: 50%; background: #000; border: 1px solid #0067c0; box-shadow: inset 0 0 0 3px #fff; }
.c2 { width: 25px; height: 25px; border-radius: 50%; background: #fff; border: 1px solid #999; }
.pal { display: grid; grid-template: repeat(3, 24px) / repeat(10, 24px); place-items: center; margin: 12px 0 0 16px; }
.pal i { width: 16px; height: 16px; border: 1px solid #8f8f8f; border-radius: 50%; }
.k0 { background: #000; } .k1 { background: #7f7f7f; } .k2 { background: #880015; } .k3 { background: #ed1c24; } .k4 { background: #ff7f27; }
.k5 { background: #fff200; } .k6 { background: #22b14c; } .k7 { background: #00a2e8; } .k8 { background: #3f48cc; } .k9 { background: #a349a4; }
.w0 { background: #fff; } .w1 { background: #c3c3c3; } .w2 { background: #b97a57; } .w3 { background: #ffaec9; } .w4 { background: #ffc90e; }
.w5 { background: #efe4b0; } .w6 { background: #b5e61d; } .w7 { background: #99d9ea; } .w8 { background: #7092be; } .w9 { background: #c8bfe7; }
.wheel { position: relative; width: 25px; height: 25px; margin: 36px 0 0 18px; border-radius: 50%; background: radial-gradient(#fff, transparent 70%), conic-gradient(#ff0 0deg, #0f8 50deg, #0ff 80deg, #00f 140deg, #80f 180deg, #f0a 230deg, #f00 280deg, #fa0 320deg, #ff0); }
.wheel svg { position: absolute; right: -4px; top: -4px; }
.g-layer .tools { display: grid; place-items: center; padding-top: 12px; }

.view { flex: 1; min-height: 0; display: grid; grid-template: 1fr 12px / 1fr 12px; }
.canvas { position: relative; overflow: hidden; background: #fff; }
/* Everything pasted on the bitmap sits at its own place on the canvas */
.art { position: absolute; left: 39px; top: 0; right: 0; bottom: 0; }
.art > * { position: absolute; white-space: nowrap; }
.pane { background: #fff; border: solid #f7f9fe; }
.pane1 { left: 636px; top: -40px; width: 400px; height: 477px; border-width: 0 0 9px 23px; }
.pane1::after { content: ""; position: absolute; left: 0; bottom: 0; width: 14px; height: 14px; background: radial-gradient(circle at 100% 0, transparent 13px, #f7f9fe 14px); }
.pane2 { left: 1010px; top: -40px; width: 260px; height: 491px; border-width: 0 0 8px 23px; background: none; }
.pane-tail { left: 1034px; top: 428px; width: 106px; height: 9px; background: #f7f9fe; }
.opt { display: flex; align-items: center; height: 64px; left: 700px; gap: 40px; font-size: 33px; }
.opt b { width: 64px; height: 64px; border: 2px solid #edf1fa; border-radius: 50%; display: grid; place-items: center; font-size: 32px; font-weight: 400; line-height: 40px; color: #8591b0; }
.oa { top: -30px; } .ob { top: 71px; } .oc { top: 177px; } .od { top: 282px; }
.fr { display: grid; justify-items: center; font-family: "Liberation Serif", serif; font-size: 36px; line-height: 46px; color: #222; }
.fr u { text-decoration: none; width: 100%; text-align: center; }
.fr u + u { border-top: 3px solid #aaa; line-height: 44px; }
.note { font-size: 22px; line-height: 30px; color: #222; }
.n1, .n2, .n3 { top: -10px; }
.n1 { left: 1099px; } .n2 { left: 1147px; } .n3 { left: 1204px; }
.m1, .m2, .m3, .m4, .m5 { top: 351px; }
.m1 { left: 71px; } .m2 { left: 215px; } .m3 { left: 285px; } .m4 { left: 336px; } .m5 { left: 400px; }
.strip { background: #f7f9fe; }
.s13 { left: 45px; top: 196px; width: 18px; height: 181px; }
.s15 { left: 354px; top: 521px; width: 23px; height: 120px; }
.q { display: flex; align-items: center; gap: 20px; height: 45px; font-size: 28px; }
.q em { font-style: normal; font-size: 24px; line-height: 45px; padding: 0 21px; border-radius: 8px; background: #f0f3ff; color: #5580ff; }
.q13 { left: 103px; top: 214px; } .q14 { left: 9px; top: 512px; } .q15 { left: 417px; top: 525px; }
.seq { font-size: 32px; line-height: 44px; }
.e13 { left: 102px; top: 296px; } .e14 { left: -2px; top: 594px; } .e15 { left: 417px; top: 606px; }
.ink { left: 79px; top: 347px; }
.vbar { display: flex; flex-direction: column; align-items: center; padding: 4px 0; background: #fafafa; }
.vbar span { width: 6px; height: 40px; margin: auto 0 48px; border-radius: 3px; background: #868686; }
.hbar { display: flex; align-items: center; padding: 0 3px 0 246px; background: #fafafa; }
.hbar span { width: 793px; height: 6px; margin-right: auto; border-radius: 3px; background: #868686; }

.status { height: 57px; flex: none; display: flex; align-items: center; padding: 0 12px 2px 0; border-top: 1px solid #e8e5e2; background: linear-gradient(90deg, #f4f2ec 10%, #faf0ee 40%, #faf0ee 65%, #f8f0e6 78%); font-size: 25px; color: #222; }
.st { height: 39px; display: flex; align-items: center; gap: 9px; white-space: nowrap; }
.pos { width: 204px; justify-content: flex-end; padding-right: 10px; border-right: 1px solid #e2deda; }
.sel { width: 136px; padding-left: 13px; border-right: 1px solid #e2deda; }
.dim { padding-left: 13px; }
.fit { margin: 0 16px 0 auto; }
.zoom { width: 100px; height: 46px; margin-right: 17px; display: flex; align-items: center; padding-right: 14px; background: #fdfbf9; border: 1px solid #e5dfdb; border-radius: 5px; }
.zoom select { appearance: none; flex: 1; min-width: 0; padding-left: 11px; outline: 0; }
.range { appearance: none; width: 130px; height: 20px; margin: 0 12px; }
.range::-webkit-slider-runnable-track { height: 4px; border-radius: 2px; background: linear-gradient(90deg, #0067c0 15%, #8a8681 15%); }
.range::-webkit-slider-thumb { appearance: none; width: 20px; height: 20px; margin-top: -8px; border-radius: 50%; border: 5px solid #fff; background: #0067c0; box-shadow: 0 0 1px #888; }

/* Windows taskbar */
.taskbar {
  position: relative;
  flex: none;
  height: 34px;
  display: flex;
  align-items: flex-start;
  overflow: hidden;
  border-top: 1px solid #b5b0ac;
  background: linear-gradient(90deg, #e3dacf 0, #e3d9cd 23%, #dfdbd5 25%, #d3e4cb 28%, #dedcd4 31%, #d5e4c9 35%, #dcdcd4 39%, #d5e5c8 43%, #dbe3ca 50%, #ead9c6 53%, #e2dccd 56%, #ebd5cc 61%, #dcdcd6 67%, #dedbd5 76%, #e4d8dc 80%, #e2d5e4 83%, #dfd6e8 86%, #e8d8cf 89%, #ead9c8 100%);
}
.apps-row { display: flex; align-items: flex-start; margin-left: 717px; }
.apps-row button { width: 44px; height: 48px; display: flex; justify-content: center; padding-top: 11px; }
.apps-row .start { width: 24px; padding-top: 12px; margin-right: 12px; }
.apps-row .cur { width: 38px; margin: 4px 3px 0; padding-top: 7px; background: rgba(255, 255, 255, .45); border-radius: 5px; }
.search { display: flex; align-items: center; gap: 8px; width: 219px; height: 48px; margin: 7px 3px 0 0; padding: 0 0 18px 11px; border-radius: 16px 16px 0 0; border: 1px solid #ccd0c2; background: #f5f6f1; }
.search input { width: 120px; height: 30px; font-size: 27px; outline: 0; }
.search input::placeholder { color: #5c5c5c; opacity: 1; }
.tray { display: flex; align-items: flex-start; margin: 11px 12px 0 auto; }
.tray > * { margin-top: 4px; }
.tray > svg:first-child { margin: 0 15px 0 0; }
.tray svg:nth-child(2) { margin-top: 8px; margin-right: 18px; }
.ime { width: 16px; margin: 1px 17px 0; font-size: 16px; line-height: 20px; }
.tray svg:nth-child(6) { margin: 4px 14px 0 8px; }
.tray time { margin: -4px 7px 0 0; font-size: 12px; line-height: 16px; text-align: right; color: #222; }
```
